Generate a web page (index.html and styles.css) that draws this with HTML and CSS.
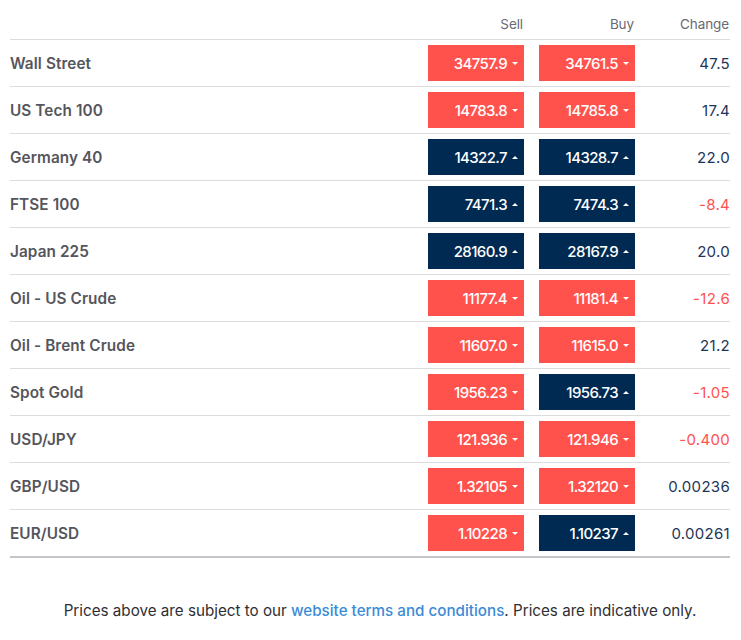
FILE: index.html
```html
<!DOCTYPE html>
<html>
<head>
<meta charset="utf-8">
<link rel="stylesheet" href="styles.css">
</head>
<body>
<div class="wrap">
  <div class="row head">
    <div class="name"></div>
    <div class="hcell">Sell</div>
    <div class="hcell">Buy</div>
    <div class="hcell">Change</div>
  </div>
  <div class="row"><div class="name">Wall Street</div><div class="price dn">34757.9<span class="caret"></span></div><div class="buy"><div class="price dn">34761.5<span class="caret"></span></div></div><div class="chg">47.5</div></div>
  <div class="row"><div class="name">US Tech 100</div><div class="price dn">14783.8<span class="caret"></span></div><div class="buy"><div class="price dn">14785.8<span class="caret"></span></div></div><div class="chg">17.4</div></div>
  <div class="row"><div class="name">Germany 40</div><div class="price up">14322.7<span class="caret"></span></div><div class="buy"><div class="price up">14328.7<span class="caret"></span></div></div><div class="chg">22.0</div></div>
  <div class="row"><div class="name">FTSE 100</div><div class="price up">7471.3<span class="caret"></span></div><div class="buy"><div class="price up">7474.3<span class="caret"></span></div></div><div class="chg neg">-8.4</div></div>
  <div class="row"><div class="name">Japan 225</div><div class="price up">28160.9<span class="caret"></span></div><div class="buy"><div class="price up">28167.9<span class="caret"></span></div></div><div class="chg">20.0</div></div>
  <div class="row"><div class="name">Oil - US Crude</div><div class="price dn">11177.4<span class="caret"></span></div><div class="buy"><div class="price dn">11181.4<span class="caret"></span></div></div><div class="chg neg">-12.6</div></div>
  <div class="row"><div class="name">Oil - Brent Crude</div><div class="price dn">11607.0<span class="caret"></span></div><div class="buy"><div class="price dn">11615.0<span class="caret"></span></div></div><div class="chg">21.2</div></div>
  <div class="row"><div class="name">Spot Gold</div><div class="price dn">1956.23<span class="caret"></span></div><div class="buy"><div class="price up">1956.73<span class="caret"></span></div></div><div class="chg neg">-1.05</div></div>
  <div class="row"><div class="name">USD/JPY</div><div class="price dn">121.936<span class="caret"></span></div><div class="buy"><div class="price dn">121.946<span class="caret"></span></div></div><div class="chg neg">-0.400</div></div>
  <div class="row"><div class="name">GBP/USD</div><div class="price dn">1.32105<span class="caret"></span></div><div class="buy"><div class="price dn">1.32120<span class="caret"></span></div></div><div class="chg">0.00236</div></div>
  <div class="row last"><div class="name">EUR/USD</div><div class="price dn">1.10228<span class="caret"></span></div><div class="buy"><div class="price up">1.10237<span class="caret"></span></div></div><div class="chg">0.00261</div></div>
  <p class="note">Prices above are subject to our <a href="#">website terms and conditions</a>. Prices are indicative only.</p>
</div>
</body>
</html>
```
FILE: styles.css
```css
html, body {
  margin: 0;
  padding: 0;
  background: #ffffff;
}
body {
  font-family: Inter, "Noto Sans", sans-serif;
}
.wrap {
  width: 720px;
  padding: 0 11px 0 10px;
}
.row {
  display: grid;
  grid-template-columns: 1fr 96px 111px 95px;
  align-items: center;
  height: 46px;
  border-top: 1px solid #dcdcdf;
}
.row.last {
  border-bottom: 2px solid #c4c4cb;
}
.row.head {
  height: 39px;
  border-top: none;
  align-items: end;
}
.hcell {
  font-size: 13.5px;
  color: #6a6a72;
  text-align: right;
  padding-bottom: 7px;
  padding-right: 1px;
  letter-spacing: -0.1px;
}
.name {
  font-size: 15.3px;
  font-weight: 600;
  color: #55555c;
  letter-spacing: 0.1px;
}
.buy {
  display: flex;
  justify-content: flex-end;
}
.price {
  width: 96px;
  height: 36px;
  box-sizing: border-box;
  display: flex;
  align-items: center;
  justify-content: flex-end;
  padding-right: 6px;
  color: #ffffff;
  font-size: 15px;
  font-weight: 500;
  letter-spacing: -0.6px;
}
.price.dn { background: #ff524d; }
.price.up { background: #002a52; }
.caret {
  width: 0;
  height: 0;
  margin-left: 5px;
  border-left: 3px solid transparent;
  border-right: 3px solid transparent;
}
.dn .caret { border-top: 3px solid #ffffff; }
.up .caret { border-bottom: 3px solid #ffffff; }
.chg {
  text-align: right;
  font-size: 15px;
  color: #1d3557;
  letter-spacing: 0.3px;
}
.chg.neg { color: #ff524d; }
.note {
  margin: 43px 0 0 0;
  padding-left: 20px;
  text-align: center;
  font-size: 15.2px;
  color: #2f2f33;
  letter-spacing: 0;
}
.note a {
  color: #3b8bd6;
  text-decoration: none;
  font-weight: 500;
}
```
